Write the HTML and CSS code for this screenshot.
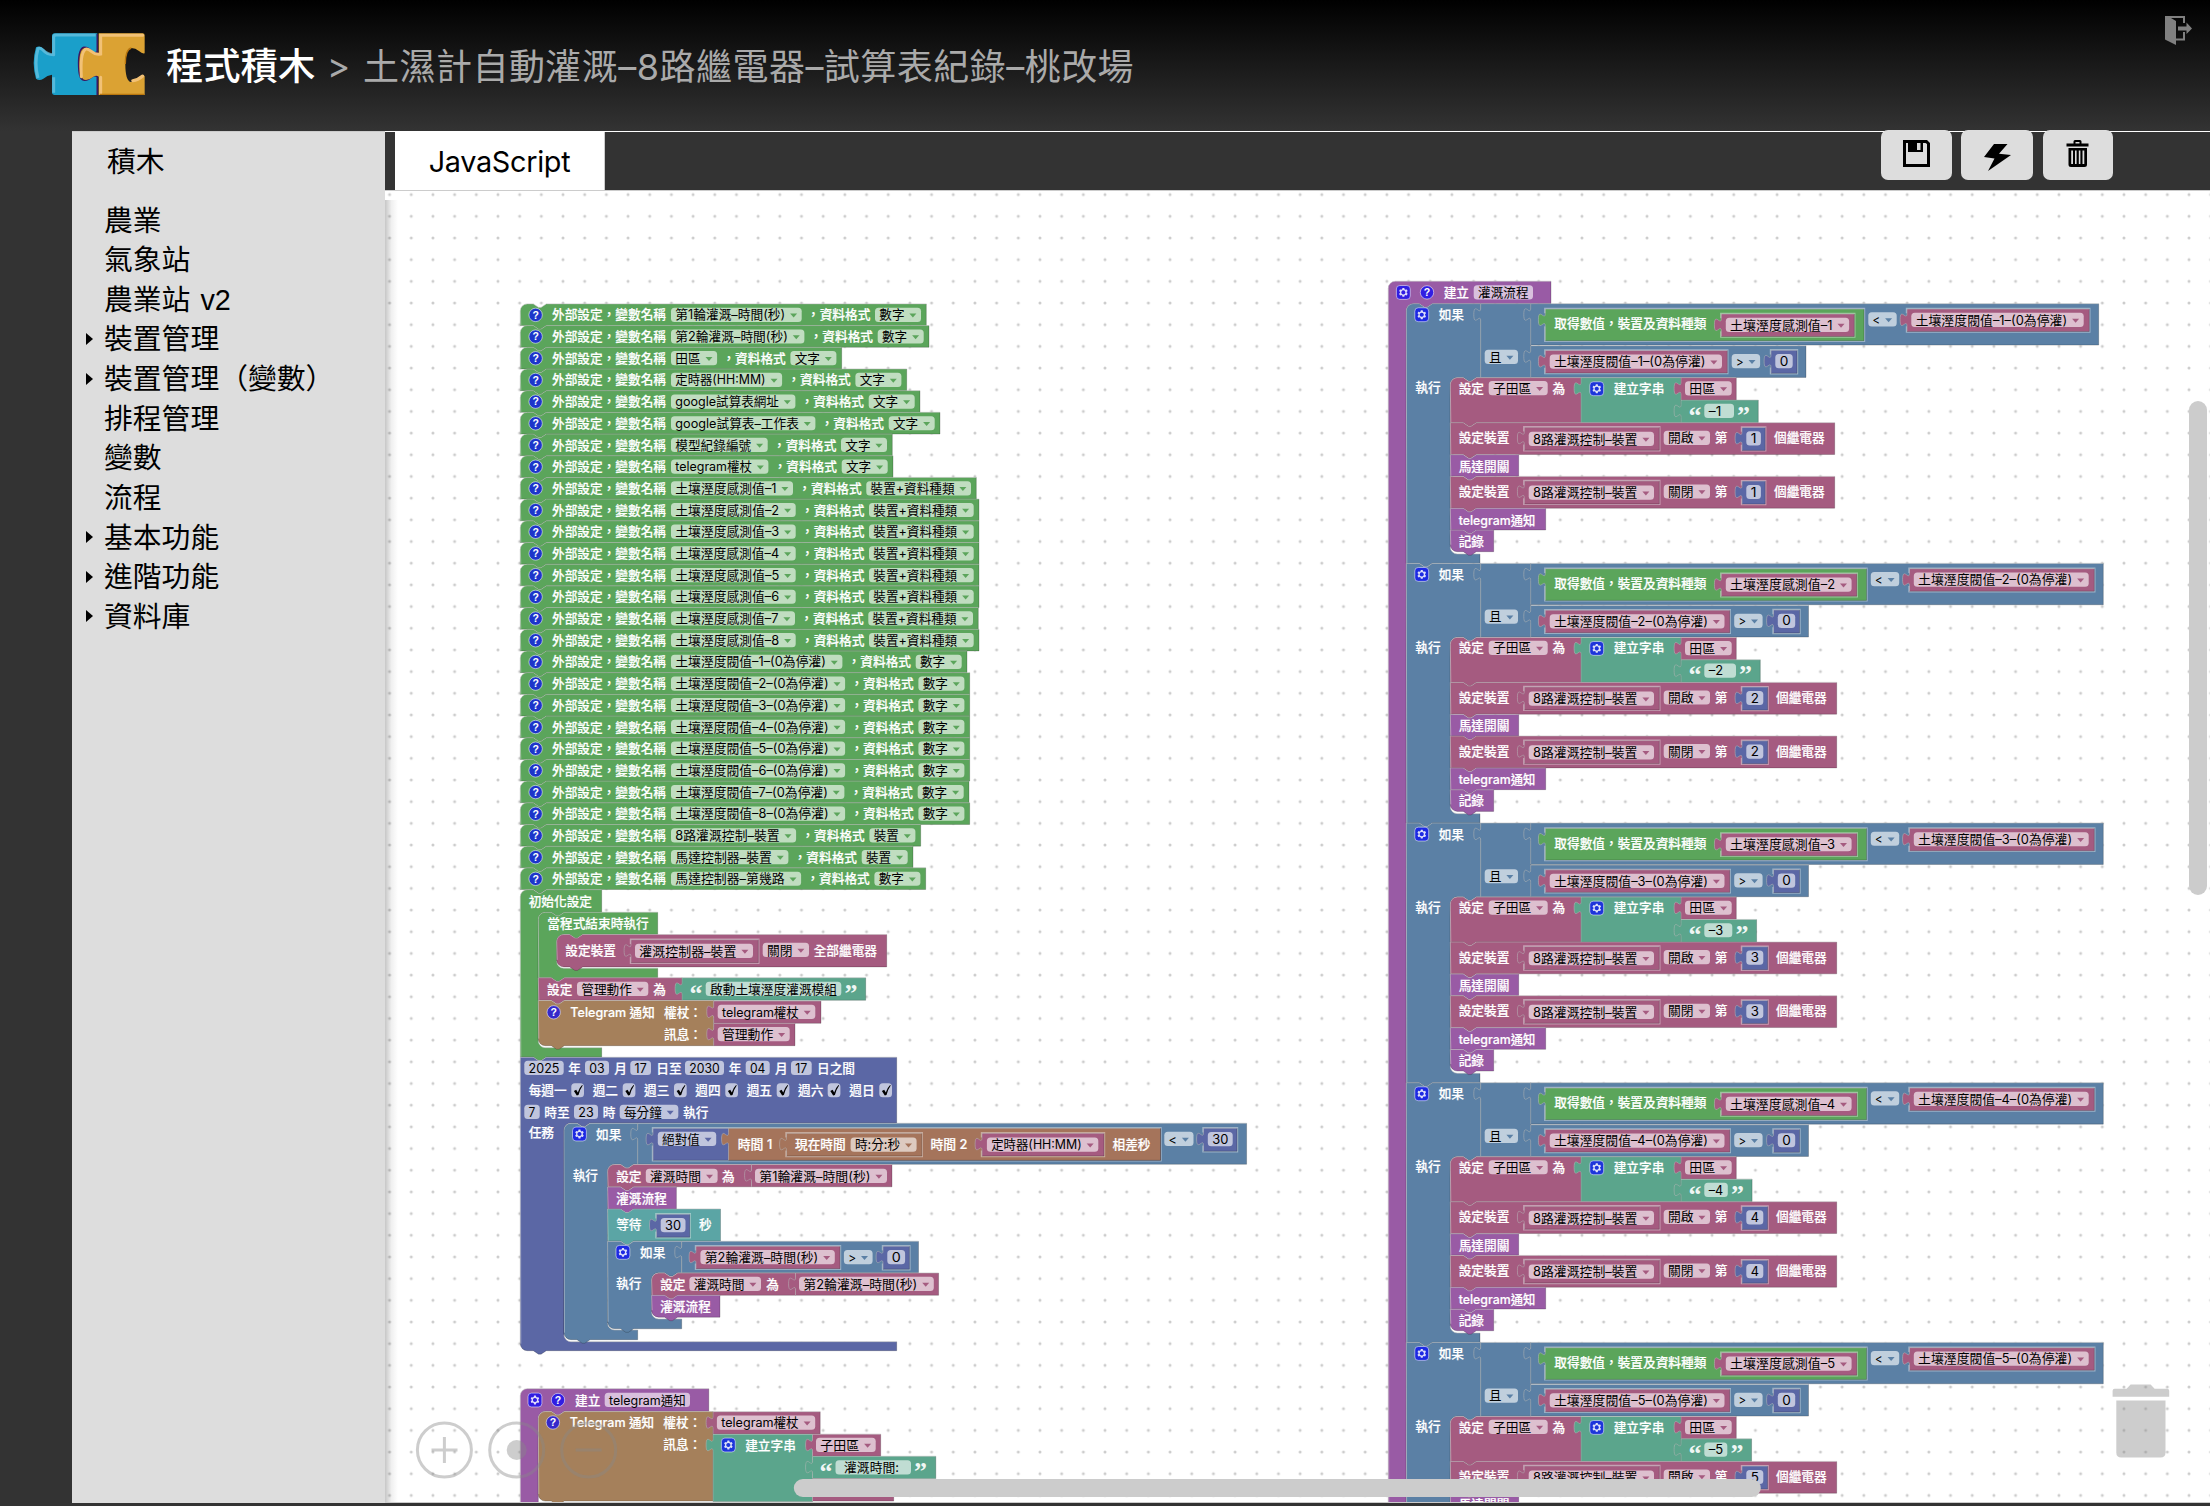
FILE: index.html
```html
<!DOCTYPE html>
<html lang="zh-Hant">
<head>
<meta charset="utf-8">
<title>程式積木</title>
<link rel="stylesheet" href="styles.css">
</head>
<body>
<header class="topbar">
  <svg class="logo" viewBox="0 0 390 240" aria-hidden="true">
    <path fill="#1a9fca" d="M78 36q0-8 8-8H214V84q-8 6-16 0q-10-12-24-14q-16 4-16 48q0 44 14 48q14 0 24-12q8-6 18 2V213H86q-8 0-8-8V152q-14 2-26 12q-12 8-22 0q-14-46 0-94q12-6 22 4q12 14 26 16z"/>
    <path fill="none" stroke="#6fc4e2" stroke-opacity=".7" stroke-width="9" stroke-linejoin="round" d="M209 33H90q-7 0-7 7V92q-20 0-32-14q-9-8-15-4q-12 44 0 88M83 160V206"/>
    <path fill="none" stroke="#3c1760" stroke-width="5" d="M214 30V84q-8 6-16 0q-10-14-24-14q-16 4-16 48q0 48 14 50q14 2 26-10q8-6 16 0V213"/>
    <path fill="#dba233" d="M218 28H350q6 0 6 6V88q-8 2-16-6q-12-10-24-10q-18 4-18 48q0 50 16 54q12 2 22-12q10-10 20-6V213H218V158q-6-6-16 0q-12 10-22 10q-20 0-20-50q0-46 18-46q10 0 20 12q12 8 20 2z"/>
    <path fill="none" stroke="#f2c176" stroke-width="9" stroke-linecap="round" d="M350 34H224V90q-14 4-28-8q-12-10-18-6q-16 12-12 82M224 160V208M320 170q16-2 30-14"/>
    <path fill="none" stroke="#b9760e" stroke-width="4" d="M298 120q0-44 18-48M222 211H355"/>
  </svg>
  <h1 class="title">程式積木</h1>
  <span class="sep">&gt;</span>
  <span class="project">土濕計自動灌溉–8路繼電器–試算表紀錄–桃改場</span>
  <svg class="exit" viewBox="0 0 27 29" aria-hidden="true">
    <path fill="#808080" d="M0 0H20V7H18V2H6L11 5V22.5H18V16H20V24.500H11V29L0 23.500z"/>
    <path fill="#808080" d="M13 10.500H21.500V6.500L27 12.500L21.500 18V14.500H13z"/>
  </svg>
</header>
<main class="workbench">
  <aside class="sidebar">
    <div class="side-head">積木</div>
    <ul class="tree">
      <li>農業</li>
      <li>氣象站</li>
      <li>農業站 v2</li>
      <li class="parent">裝置管理</li>
      <li class="parent">裝置管理（變數）</li>
      <li>排程管理</li>
      <li>變數</li>
      <li>流程</li>
      <li class="parent">基本功能</li>
      <li class="parent">進階功能</li>
      <li class="parent">資料庫</li>
    </ul>
  </aside>
  <section class="editor">
    <div class="toolbar">
      <div class="tab">JavaScript</div>
      <div class="actions">
        <button class="action save" aria-label="save"><svg viewBox="0 0 27 27"><path fill-rule="evenodd" d="M0 0H24L27 3V27H0zM3 3V24H24V4L22.500 3H20V12H5V3zM14 3V10H17.500V3z"/></svg></button>
        <button class="action run" aria-label="run"><svg viewBox="0 0 27 27"><path d="M10 0H23.500L15 9.700L27 11L4 27L10.500 14.500L0 13z"/></svg></button>
        <button class="action del" aria-label="delete"><svg viewBox="0 0 22 27"><path fill-rule="evenodd" d="M0 3.500H7V1.500Q7 0 8.500 0H13.500Q15 0 15 1.500V3.500H22V6.500H0zM9 2V3.500H13V2zM2 8H20.500V24.500Q20.500 27 18 27H4.500Q2 27 2 24.500zM4.700 10.500V24H6.500V10.500zM8.500 10.500V24H10.100V10.500zM12.300 10.500V24H13.900V10.500zM16 10.500V24H17.800V10.500z"/></svg></button>
      </div>
    </div>
    <svg class="canvas" id="canvas" viewBox="385 191 1825 1312" role="img" aria-label="blocks"></svg>
  </section>
</main>
<script src="blocks.js"></script>
</body>
</html>
```
FILE: styles.css
```css
* { box-sizing: border-box; }
body {
  margin: 0;
  width: 2210px;
  height: 1506px;
  display: flex;
  flex-direction: column;
  overflow: hidden;
  background: #333;
  font-family: Inter, "Noto Sans CJK TC", sans-serif;
  text-spacing-trim: space-all;
}
.topbar {
  height: 131px;
  flex: none;
  display: flex;
  align-items: center;
  padding: 0 18px 0 26px;
  background: linear-gradient(#000, #333);
  color: #aaa;
  font-size: 36px;
  white-space: nowrap;
}
.logo { width: 130px; height: 80px; flex: none; margin-bottom: 3px; }
.title {
  margin: 3px 0 0 10px;
  width: 161px;
  color: #fff;
  font-size: 37.3px;
  font-weight: 500;
  line-height: 1.2;
}
.sep { width: 36px; font-size: 35px; margin-bottom: 2px; }
.project { letter-spacing: .47px; margin-bottom: 4px; }
.exit { width: 27px; height: 29px; margin-left: auto; align-self: flex-start; margin-top: 16px; }
.workbench { flex: 1; display: flex; padding: 0 0 3px 72px; min-height: 0; }
.sidebar {
  width: 313px;
  flex: none;
  background: #ddd;
  color: #000;
  font-family: "Liberation Sans", "Noto Sans CJK TC", sans-serif;
  font-size: 28.8px;
}
.side-head {
  height: 60px;
  padding-left: 35px;
  line-height: 61px;
  border-top: 1px solid #ccc;
}
.tree { list-style: none; margin: 0; padding: 10.500px 0 0 32px; }
.tree li { position: relative; height: 39.65px; line-height: 39.65px; white-space: nowrap; word-spacing: 2px; }
.tree .parent::before {
  content: "";
  position: absolute;
  left: -18px;
  top: 12.500px;
  border: 6.5px solid transparent;
  border-left: 7.500px solid #000;
  border-right: 0;
}
.editor { flex: 1; display: flex; flex-direction: column; min-width: 0; }
.toolbar {
  height: 60px;
  flex: none;
  display: flex;
  justify-content: space-between;
  padding: 0 97px 0 10px;
  border-top: 1px solid #fff;
  border-bottom: 1px solid #ccc;
}
.tab {
  width: 210px;
  background: #fff;
  border-right: 1px solid #ccc;
  color: #000;
  font-size: 28.8px;
  letter-spacing: -.3px;
  line-height: 60px;
  text-align: center;
}
.actions { display: flex; gap: 9px; margin-top: -2px; }
.action {
  width: 72px;
  height: 50px;
  border: 0;
  border-radius: 7px;
  background: #ddd;
  padding: 0;
  display: flex;
  align-items: flex-start;
  justify-content: center;
}
.action svg { width: 27px; height: 27px; margin-top: 10px; }
.save { width: 71px; }
.run svg { margin: 14px 0 0 0; }
.del { width: 70px; margin-left: 1px; }
.del svg { margin-right: 2px; }
.canvas {
  width: 1825px;
  flex: 1;
  min-height: 0;
  display: block;
  overflow: hidden;
  background: #fff;
  font-family: Inter, "Noto Sans CJK TC", sans-serif;
  font-size: 12.7px;
}
.label { fill: #fff; font-weight: 500; stroke: #fff; stroke-width: .2px; }
.value { fill: #000; }
.quote { fill: #fff; fill-opacity: .92; font: bold 26px "Liberation Serif", serif; }
.help { fill: #fff; font: bold 10.500px "Liberation Sans", sans-serif; text-anchor: middle; }
```
FILE: blocks.js
```javascript
const GREEN = '#5ba55b', PURPLE = '#995ba5', BLUE = '#5b80a5', PINK = '#a55b80',
  TEAL = '#5ba58c', INDIGO = '#5b67a5', BROWN = '#a5805b', ORANGE = '#a5745b', CYAN = '#5ba5a5';
const R = 7, EM = 12.67;
const out = [];
const LIGHT = 'stroke="#fff" stroke-opacity=".38" stroke-width="1" fill="none"';

function shape(d, hi, c, nested) {
  if (nested) out.push(`<path d="${nested}" fill="none" stroke="#fff" stroke-opacity=".4" stroke-width="2.4"/>`);
  out.push(`<path d="${d}" fill="${c}"/><path d="${d}" fill="none" stroke="#000" stroke-opacity=".2" stroke-width="1"/>`);
  out.push(`<path d="${hi}" ${LIGHT}/>`);
}
// Statement block: notch on top, bump below; o.arm = [innerX, headerBottom, lipTop, lipRight]
function stmt(x, y, w, h, c, o = {}) {
  const r = x + w, b = y + h, nx = x + 13;
  let top = o.round ? `M${x} ${y + R}a${R} ${R} 0 0 1 ${R} ${-R}` : `M${x} ${y}`;
  if (!o.hat) top += `H${nx}l5.2 3.5h2.6l5.200-3.500`;
  top += `H${r}`;
  let d = top;
  let hi = top.replace('M', `M${x + .5} ${b - (o.end ? R : 0)}L`);
  if (o.arm) {
    const [ix, hb, lt, lr] = o.arm;
    d += `V${hb}H${ix + 26}l-5.200 3.500h-2.600l-5.200-3.500H${ix + R}a${R} ${R} 0 0 0 ${-R} ${R}V${lt - R}a${R} ${R} 0 0 0 ${R} ${R}H${lr}`;
    hi += `M${ix} ${lt - R}a${R} ${R} 0 0 0 ${R} ${R}H${lr}`;
  }
  d += `V${b}`;
  if (!o.flat) d += `H${nx + 13}l-5.200 3.500h-2.600l-5.200-3.500`;
  d += o.end ? `H${x + R}a${R} ${R} 0 0 1 ${-R} ${-R}Z` : `H${x}Z`;
  shape(d, hi, c);
}
function val(x, y, w, h, c, nested) {
  const tab = `V${y + 17.3}c0-8.670-6.900 6.900-6.900-6.500s6.900 2.170 6.900-6.500V${y}H${x + w}`;
  const rim = nested && `M${x} ${y + 17.3}V${y + h}H${x + w}V${y}H${x}V${y + 4.3}`;
  shape(`M${x} ${y + h}${tab}V${y + h}Z`, `M${x} ${y + h}${tab}`, c, rim);
}
const esc = s => s.replace(/</g, '&lt;').replace(/>/g, '&gt;');
function text(cls, x, cy, s, w) {
  out.push(`<text class="${cls}" x="${x}" y="${cy + 4.5}"${w ? ` textLength="${w}" lengthAdjust="spacingAndGlyphs"` : ''}>${esc(s)}</text>`);
}
const label = (x, cy, s, w) => text('label', x, cy, s, w || s.length * EM);
function box(x, cy, w, s, tx, tw) {
  out.push(`<rect x="${x}" y="${cy - 7.2}" width="${w}" height="14.2" rx="3.500" fill="#fff" fill-opacity=".62"/>`);
  text('value', x + (tx || 4.3), cy, s, tw || w - 8.6);
}
function drop(x, cy, w, s, c) {
  box(x, cy, w, s, 4.3, w - 20.8);
  out.push(`<path d="M${x + w - 11.6} ${cy - 1.3}h7l-3.500 4z" fill="${c}"/>`);
}
function gear(cx, cy) {
  out.push(`<g transform="translate(${cx - 6.9} ${cy - 6.9}) scale(.8667)"><rect width="16" height="16" rx="4" fill="#00f" fill-opacity=".68" stroke="#fff" stroke-opacity=".6"/><path fill="#fff" fill-opacity=".85" fill-rule="evenodd" d="m4.203,7.296 0,1.368 -0.92,0.677 -0.11,0.41 0.9,1.559 0.41,0.11 1.043,-0.457 1.187,0.683 0.127,1.134 0.3,0.3 1.8,0 0.3,-0.299 0.127,-1.138 1.185,-0.682 1.046,0.458 0.409,-0.11 0.9,-1.559 -0.11,-0.41 -0.92,-0.677 0,-1.366 0.92,-0.677 0.11,-0.41 -0.9,-1.559 -0.409,-0.109 -1.046,0.458 -1.185,-0.682 -0.127,-1.138 -0.3,-0.299 -1.8,0 -0.3,0.3 -0.126,1.135 -1.187,0.682 -1.043,-0.457 -0.41,0.11 -0.899,1.559 0.108,0.409zM8 5.600a2.400 2.400 0 1 0 .01 0z"/></g>`);
}
function help(cx, cy) {
  out.push(`<circle cx="${cx}" cy="${cy}" r="6.700" fill="#00f" fill-opacity=".68" stroke="#fff" stroke-opacity=".6" stroke-width=".9"/><text class="help" x="${cx}" y="${cy + 3.8}">?</text>`);
}
function quote(x, cy, s) { out.push(`<text class="quote" x="${x - 1.5}" y="${cy + 12.5}">${s}</text>`); }
function number(x, y, w, s) {
  val(x, y, w, 23, INDIGO, true);
  box(x + 4.3, y + 11, w - 8.6, s, 4.4, w - 17.4);
}

// Variable declarations
const rows = [
  ['第1輪灌溉–時間(秒)', '數字', 926.3], ['第2輪灌溉–時間(秒)', '數字', 929], ['田區', '文字', 841.7],
  ['定時器(HH:MM)', '文字', 906.7], ['google試算表網址', '文字', 920], ['google試算表–工作表', '文字', 940],
  ['模型紀錄編號', '文字', 892.3], ['telegram權杖', '文字', 893],
  ...[976.3, 979, 979, 979, 979, 979, 978.3, 979].map((r, i) => [`土壤溼度感測值–${i + 1}`, '裝置+資料種類', r]),
  ...[967, 969.7, 969.7, 969.7, 969.7, 969.7, 969, 969.7].map((r, i) => [`土壤溼度閥值–${i + 1}–(0為停灌)`, '數字', r]),
  ['8路灌溉控制–裝置', '裝置', 920.7], ['馬達控制器–裝置', '裝置', 913], ['馬達控制器–第幾路', '數字', 925.7]
];
rows.forEach(([name, type, right], i) => {
  const y = 303.9 + i * 21.69, cy = y + 11;
  stmt(520.3, y, right - 520.3, 21.69, GREEN, { round: true });
  help(535.6, cy);
  label(552, cy, '外部設定，變數名稱');
  const w2 = type.length > 2 ? 104.7 : 46, x2 = right - 5.3 - w2, x1 = x2 - 4.7 - 63.3;
  drop(671, cy, x1 - 5.3 - 671, name, GREEN);
  label(x1, cy, '，資料格式');
  drop(x2, cy, w2, type, GREEN);
});

// Initial setup
stmt(520.3, 889.7, 81.4, 167.3, GREEN, { round: true, arm: [538.3, 912.3, 1047.7, 601.7] });
label(528.7, 901, '初始化設定');
stmt(538.3, 912.3, 119.4, 65.4, GREEN, { round: true, arm: [556.7, 934.4, 968.3, 657.7] });
label(547.3, 923, '當程式結束時執行');
stmt(556.7, 934.5, 330, 32.4, PINK, { round: true, end: true });
label(565.3, 950, '設定裝置');
val(631, 939.7, 127.3, 23, PINK, true);
drop(635, 951, 118, '灌溉控制器–裝置', PINK);
drop(762.7, 950, 46.3, '關閉', PINK);
label(813.7, 950, '全部繼電器');
stmt(538.3, 977.8, 143.7, 22.5, PINK);
label(547, 989, '設定'); drop(577, 989, 71.3, '管理動作', PINK); label(653.3, 989, '為');
val(682, 977.8, 183.7, 22.5, TEAL);
quote(691, 989, '“'); box(705.7, 989, 135.6, '啟動土壤溼度灌溉模組'); quote(846, 989, '”');
stmt(538.3, 1000.5, 175.4, 45.2, BROWN, { end: true });
help(553.7, 1012.3);
label(570.3, 1012, 'Telegram 通知', 84.4); label(664, 1012, '權杖：'); label(664, 1034, '訊息：');
val(713.7, 1001, 107.3, 22.3, PINK); drop(717.7, 1012, 97.6, 'telegram權杖', PINK);
val(713.7, 1023.3, 81.3, 22.4, PINK); drop(717.7, 1034.3, 72, '管理動作', PINK);

// Schedule
stmt(520.3, 1057.3, 376.4, 293.4, INDIGO, { end: true, arm: [564, 1123, 1341.7, 896.7] });
[[524.3, 39.4, '2025'], [585, 24, '03'], [630.3, 20.7, '17'], [685, 39, '2030'], [745.7, 24, '04'], [791, 20.7, '17']]
  .forEach(([x, w, s]) => box(x, 1068, w, s));
[[568.3, '年'], [614.3, '月'], [656.3, '日至'], [728.7, '年'], [775, '月'], [817, '日之間']].forEach(([x, s]) => label(x, 1068, s));
[[528.7, '每週一', 571.3], [592.7, '週二', 622.7], [644, '週三', 674], [695.3, '週四', 725.3], [746.7, '週五', 776.7], [798, '週六', 827.7], [849.3, '週日', 879.3]]
  .forEach(([x, s, cx]) => {
    label(x, 1090, s);
    out.push(`<rect x="${cx}" y="1083.200" width="12.700" height="14" rx="3.500" fill="#fff" fill-opacity=".62"/><path d="M${cx + 2.6} 1091l2.300-1.300 1.600 2.800q1.500-4.800 4.300-7.500l.6.500q-3 4.300-4.200 9.500l-1.700.6z" fill="#000"/>`);
  });
box(524.3, 1112, 15.4, '7'); label(544.3, 1112, '時至'); box(574, 1112, 24, '23'); label(602.7, 1112, '時');
drop(619.7, 1112, 58.6, '每分鐘', INDIGO); label(683, 1112, '執行');
label(528.7, 1132.9, '任務');

stmt(564, 1123.3, 73.7, 216.4, BLUE, { round: true, end: true, arm: [607.6, 1164.3, 1330, 637.7] });
gear(579.4, 1134); label(596, 1134, '如果'); label(572.7, 1175, '執行');
val(637.7, 1123.3, 608.9, 41, BLUE);
val(653, 1128.3, 507.5, 32, INDIGO, true);
drop(657.8, 1139, 58.4, '絕對值', INDIGO);
val(728.5, 1128.3, 432, 32, ORANGE);
label(737.7, 1144, '時間 1', 34.6);
val(786.5, 1133.3, 135.3, 22.7, ORANGE, true);
label(795, 1144.7, '現在時間'); drop(850.6, 1144.7, 66, '時:分:秒', ORANGE);
label(930.4, 1144, '時間 2', 37);
val(982, 1133.3, 122, 22.7, PINK, true); drop(986.9, 1144.7, 111.4, '定時器(HH:MM)', PINK);
label(1112.5, 1144, '相差秒');
drop(1164.3, 1139, 29.2, '<', BLUE);
number(1203.5, 1128.2, 33.5, '30');

stmt(607.6, 1164.5, 143.9, 22.3, PINK, { round: true });
label(616.2, 1176, '設定'); drop(645.8, 1176, 71.8, '灌溉時間', PINK); label(722, 1176, '為');
val(751.5, 1164.5, 140.5, 22.3, PINK); drop(755, 1176, 132, '第1輪灌溉–時間(秒)', PINK);
stmt(607.6, 1187, 68.8, 22, PURPLE); label(616.2, 1198, '灌溉流程');
stmt(607.6, 1209, 112.9, 32, CYAN); label(616.2, 1224, '等待'); number(656.4, 1214.2, 33.4, '30'); label(699, 1224, '秒');
stmt(607.6, 1241.3, 74, 87.5, BLUE, { end: true, arm: [651.6, 1272.7, 1319, 681.7] });
gear(622.9, 1252.3); label(640, 1252.3, '如果'); label(616, 1283.5, '執行');
val(681.7, 1241.3, 236.8, 31.4, BLUE);
val(696, 1246.2, 144, 22.5, PINK, true); drop(700.4, 1257.2, 134.4, '第2輪灌溉–時間(秒)', PINK);
drop(843.9, 1257.2, 28.7, '>', BLUE); number(883, 1246.2, 26.4, '0');
stmt(651.6, 1273, 143.9, 22.3, PINK, { round: true });
label(660.2, 1284, '設定'); drop(689.4, 1284, 71.6, '灌溉時間', PINK); label(766.2, 1284, '為');
val(795.5, 1273, 143.1, 22.3, PINK); drop(799, 1284, 134.8, '第2輪灌溉–時間(秒)', PINK);
stmt(651.6, 1295.3, 68.4, 21.9, PURPLE, { end: true }); label(660.2, 1306.2, '灌溉流程');

// Procedure: telegram notification
stmt(520.3, 1388.7, 188.5, 300, PURPLE, { round: true, hat: true, arm: [538.3, 1411.3, 1680, 601] });
gear(534.9, 1400); help(558, 1400); label(575, 1400, '建立'); box(604.7, 1400, 85.3, 'telegram通知');
stmt(538.3, 1411.6, 174.7, 89.5, BROWN, { round: true, end: true });
help(552.9, 1422.5); label(569.7, 1422.5, 'Telegram 通知', 84.4); label(663.3, 1422.5, '權杖：'); label(663.3, 1444.8, '訊息：');
val(713, 1411.7, 107.2, 22.3, PINK); drop(716.9, 1422.7, 98.3, 'telegram權杖', PINK);
val(713, 1434.2, 99.5, 67.4, TEAL); gear(728.3, 1445); label(745.2, 1445, '建立字串');
val(812.5, 1434.2, 68.2, 22, PINK); drop(816, 1445, 59.7, '子田區', PINK);
val(812.5, 1456.3, 123.3, 22.3, TEAL); quote(821, 1467.5, '“'); box(835.5, 1467.5, 75.5, '灌溉時間:', 8.5, 55); quote(915.5, 1467.5, '”');
val(812.5, 1478.8, 81.2, 22.3, PINK);

// Procedure: irrigation flow
stmt(1388.3, 281.3, 162.7, 1500, PURPLE, { round: true, hat: true, arm: [1406.3, 303.7, 1700, 1480] });
gear(1403.3, 292.4); help(1427, 292.4); label(1443.7, 292.4, '建立'); box(1473.7, 292.4, 59.3, '灌溉流程');
for (let i = 0; i < 5; i++) {
  const T = 303.7 + i * 259.68, n = i + 1, k = i ? 2.5 : 0;
  stmt(1406.3, T, 74.4, 259.65, BLUE, { round: i === 0, arm: [1450.3, T + 73.8, T + 250.3, 1480] });
  gear(1421.7, T + 11); label(1438.7, T + 11, '如果'); label(1415.3, T + 84, '執行');
  val(1480.7, T, 50.200, 73.8, BLUE);
  drop(1484.7, T + 53.3, 33.3, '且', BLUE);
  val(1530.7, T, 568 + (i ? 4.6 : 0), 41.4, BLUE);
  val(1545.3, T + 5.3, 318.7 + k, 31.7, GREEN, true);
  label(1554.3, T + 20, '取得數值，裝置及資料種類');
  val(1721.3, T + 10.3, 133 + k, 22.500, PINK, true);
  drop(1725.8, T + 21.3, 123.3 + k, `土壤溼度感測值–${n}`, PINK);
  drop(1868.3 + k, T + 15.8, 28.4, '<', BLUE);
  val(1907 + k, T + 5.3, 182.3 + k, 22.500, PINK, true);
  drop(1911.3 + k, T + 16.3, 172.4 + k, `土壤溼度閥值–${n}–(0為停灌)`, PINK);
  val(1530.7, T + 42, 275.3 + k, 31.7, BLUE);
  val(1545.3, T + 46.8, 182 + k, 22.5, PINK, true);
  drop(1549.7, T + 58, 172.3 + k, `土壤溼度閥值–${n}–(0為停灌)`, PINK);
  drop(1731.7 + k, T + 57.500, 28.4, '>', BLUE);
  number(1771 + k, T + 46.6, 26, '0');

  stmt(1450.3, T + 74, 130.7, 45, PINK, { round: true });
  label(1458.7, T + 84.6, '設定'); drop(1488.7, T + 84.6, 59, '子田區', PINK); label(1552.5, T + 84.6, '為');
  val(1581, T + 74, 100, 45, TEAL); gear(1596.7, T + 85); label(1613.7, T + 84.6, '建立字串');
  val(1681, T + 74, 55.3, 22.3, PINK); drop(1685, T + 84.8, 46.7, '田區', PINK);
  const qw = [29.7, 31.7, 28, 23.500, 23][i];
  val(1681, T + 96.4, 47.6 + qw, 22.6, TEAL);
  quote(1690, T + 107.3, '“'); box(1704.3, T + 107.3, qw, `–${n}`, 4.5, i ? 14.400 : 12.500); quote(1704.3 + qw + 4.6, T + 107.3, '”');

  [['開啟', 119], ['關閉', 172.700]].forEach(([act, dy], j) => {
    const y = T + dy;
    if (y > 1502) return;
    stmt(1450.3, y, 384.4 + (i ? 2 : 0), 31.8, PINK);
    label(1458.7, y + 15, '設定裝置');
    val(1524.3, y + 4.5, 135, 23, PINK, true); drop(1528.7, y + 16.3, 125.3, '8路灌溉控制–裝置', PINK);
    drop(1663.7, y + 15.2, 46.3, act, PINK); label(1714.7, y + 15.2, '第');
    number(1742, y + 4.7, i ? 25.6 : 23.2, String(n)); label(1774 + (i ? 2 : 0), y + 15, '個繼電器');
    if (!j) { stmt(1450.3, T + 151, 68.4, 21.5, PURPLE); label(1458.7, T + 162.3, '馬達開關'); }
  });
  if (i === 4) break;
  stmt(1450.3, T + 204.6, 95.4, 21.7, PURPLE); label(1458.7, T + 216.3, 'telegram通知', 76.7);
  stmt(1450.3, T + 226.4, 43.4, 21.6, PURPLE, { end: true }); label(1458.7, T + 237.5, '記錄');
}

const furniture = `
<g fill="none" stroke="#888" stroke-opacity=".42" stroke-width="3">
<circle cx="444.400" cy="1450" r="27"/><path d="M431.500 1450h26M444.400 1437v26"/>
<circle cx="516.700" cy="1450" r="27"/><circle cx="516.700" cy="1450" r="10" fill="#888" fill-opacity=".42" stroke="none"/>
<circle cx="588.700" cy="1450" r="27"/><path d="M575.700 1450h26"/></g>
<g fill="#888" fill-opacity=".42"><path d="M2112.600 1396.700v-6q0-2 2-2h12l4-4.300h20l4 4.300h12.600q2 0 2 2v6z"/><path d="M2116.300 1400.500h49.200v52q0 5-5 5h-39.200q-5 0-5-5z"/></g>
<rect x="793.800" y="1479" width="967" height="18" rx="9" fill="#ccc"/>
<rect x="2189" y="401" width="18" height="494" rx="9" fill="#ccc"/>
<path d="M385 1502.500H2210" stroke="#ccc"/>`;

document.getElementById('canvas').innerHTML = `
<defs>
<pattern id="grid" x="378.750" y="183.760" width="21.680" height="21.680" patternUnits="userSpaceOnUse"><circle cx="10.840" cy="10.840" r="1.500" fill="#ccc"/></pattern>
<linearGradient id="shade"><stop offset="0" stop-color="#000" stop-opacity=".22"/><stop offset=".5" stop-color="#000" stop-opacity=".06"/><stop offset="1" stop-color="#000" stop-opacity="0"/></linearGradient>
</defs>
<rect x="385" y="191" width="1825" height="1312" fill="url(#grid)"/>
<rect x="385" y="200" width="13" height="1303" fill="url(#shade)"/>` + out.join('') + furniture;
```
